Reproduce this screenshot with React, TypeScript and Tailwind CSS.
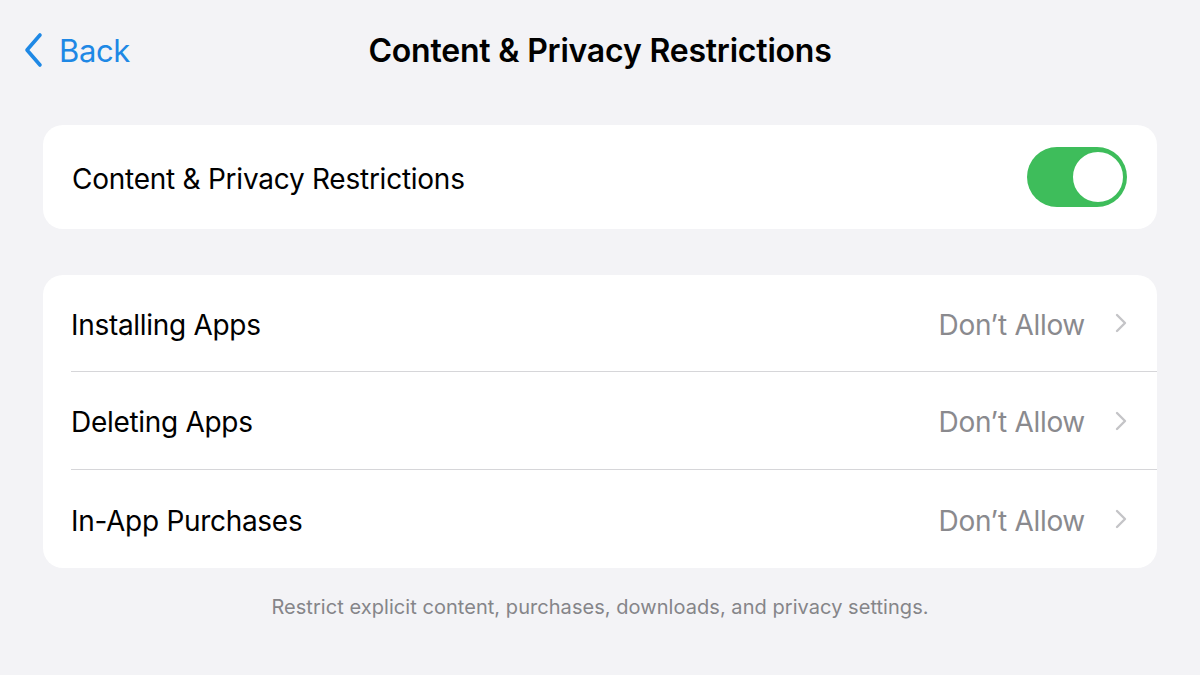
import React from "react";

const rows = [
  { label: "Installing Apps", value: "Don\u2019t Allow", h: "h-[96px]" },
  { label: "Deleting Apps", value: "Don\u2019t Allow", h: "h-[98px]" },
  { label: "In-App Purchases", value: "Don\u2019t Allow", h: "h-[99px]" },
];

function Chevron({ className }: { className?: string }) {
  return (
    <svg viewBox="0 0 12 20" className={className} fill="none">
      <path d="M2 2l8 8-8 8" stroke="currentColor" strokeWidth="2.4" strokeLinecap="round" strokeLinejoin="round" />
    </svg>
  );
}

export default function App() {
  return (
    <div
      className="w-[1200px] h-[675px] bg-[#f3f3f6] overflow-hidden text-black"
      style={{ fontFamily: "Inter, 'Noto Sans', sans-serif" }}
    >
      {/* navigation bar */}
      <div className="relative h-[100px] flex items-center justify-center">
        <div className="absolute left-[24px] top-[32px] flex items-center gap-[15px] text-[#1e88e5]">
          <svg viewBox="0 0 20 36" className="w-[20px] h-[36px]" fill="none">
            <path d="M16 3L3 18l13 15" stroke="currentColor" strokeWidth="3.6" strokeLinecap="round" strokeLinejoin="round" />
          </svg>
          <span className="text-[31px] leading-none tracking-[-0.4px]">Back</span>
        </div>
        <h1 className="text-[32px] font-semibold leading-none tracking-[-0.2px] pt-[2px]">
          Content &amp; Privacy Restrictions
        </h1>
      </div>

      <div className="px-[43px] pt-[25px]">
        {/* master switch */}
        <div className="bg-white rounded-[20px] h-[104px] pl-[29px] pr-[30px] flex items-center justify-between">
          <span className="text-[28px] tracking-[-0.25px] pt-[4px]">Content &amp; Privacy Restrictions</span>
          <div className="w-[100px] h-[60px] rounded-full bg-[#3ebd5b] relative">
            <div className="absolute right-[2px] top-[3px] w-[54px] h-[54px] rounded-full bg-white border-[2px] border-[#3ebd5b]" />
          </div>
        </div>

        {/* restriction rows */}
        <div className="mt-[46px] bg-white rounded-[20px] pl-[28px]">
          {rows.map((r, i) => (
            <div
              key={r.label}
              className={`${r.h} flex items-center justify-between pr-[30px] pt-[3px] ${i > 0 ? "border-t border-[#d6d6d9]" : ""}`}
            >
              <span className="text-[28px] tracking-[-0.3px]">{r.label}</span>
              <div className="flex items-center gap-[30px]">
                <span className="text-[28px] text-[#8a8a8e] tracking-[-0.3px]">{r.value}</span>
                <Chevron className="w-[12px] h-[20px] text-[#c4c4c7] -mt-[3px]" />
              </div>
            </div>
          ))}
        </div>

        <p className="mt-[24px] text-center text-[20px] text-[#858589] tracking-[0.05px]">
          Restrict explicit content, purchases, downloads, and privacy settings.
        </p>
      </div>
    </div>
  );
}
